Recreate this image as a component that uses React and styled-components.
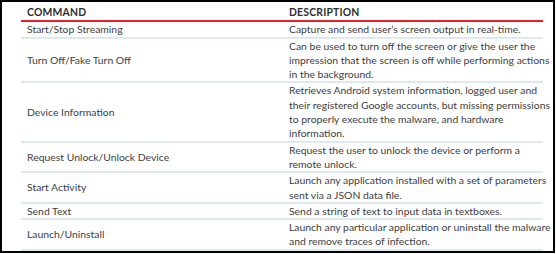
import React from 'react';
import styled, { createGlobalStyle } from 'styled-components';

const rows = [
  { command: 'Start/Stop Streaming', desc: 'Capture and send user’s screen output in real-time.' },
  {
    command: 'Turn Off/Fake Turn Off',
    desc: 'Can be used to turn off the screen or give the user the\nimpression that the screen is off while performing actions\nin the background.',
  },
  {
    command: 'Device Information',
    desc: 'Retrieves Android system information, logged user and\ntheir registered Google accounts, but missing permissions\nto properly execute the malware, and hardware\ninformation.',
  },
  {
    command: 'Request Unlock/Unlock Device',
    desc: 'Request the user to unlock the device or perform a\nremote unlock.',
  },
  {
    command: 'Start Activity',
    desc: 'Launch any application installed with a set of parameters\nsent via a JSON data file.',
  },
  { command: 'Send Text', desc: 'Send a string of text to input data in textboxes.' },
  {
    command: 'Launch/Uninstall',
    desc: 'Launch any particular application or uninstall the malware\nand remove traces of infection.',
  },
];

const App = () => {
  return (
    <>
      <GlobalStyle />
      <Frame>
        <Table>
          <colgroup>
            <col style={{ width: 262 }} />
            <col style={{ width: 260 }} />
          </colgroup>
          <thead>
            <tr>
              <Head>Command</Head>
              <Head>Description</Head>
            </tr>
          </thead>
          <tbody>
            {rows.map((row, index) => (
              <tr key={index}>
                <Cell>{row.command}</Cell>
                <Cell>{row.desc}</Cell>
              </tr>
            ))}
          </tbody>
        </Table>
      </Frame>
    </>
  );
};

export default App;

const GlobalStyle = createGlobalStyle`
  body {
    margin: 0;
    background: #fff;
    font-family: Lato, "Open Sans", sans-serif;
  }
`;

// outer frame
const Frame = styled.div`
  width: 555px;
  height: 253px;
  box-sizing: border-box;
  border: 2px solid #000;
  padding: 0 0 0 19px;
  overflow: hidden;
`;

const Table = styled.table`
  width: 522px;
  table-layout: fixed;
  border-collapse: collapse;
  color: #404040;
  font-size: 10.4px;
  line-height: 14.3px;
`;

// header cell
const Head = styled.th`
  text-align: left;
  font-weight: 700;
  text-transform: uppercase;
  letter-spacing: 0.2px;
  color: #2e2e2e;
  padding: 3px 6px 1px;
  border-bottom: 2px solid #ee1c25;
`;

// body cell
const Cell = styled.td`
  vertical-align: middle;
  white-space: pre;
  padding: 0 6px;
  border-bottom: 2px solid #dde9ee;
`;
